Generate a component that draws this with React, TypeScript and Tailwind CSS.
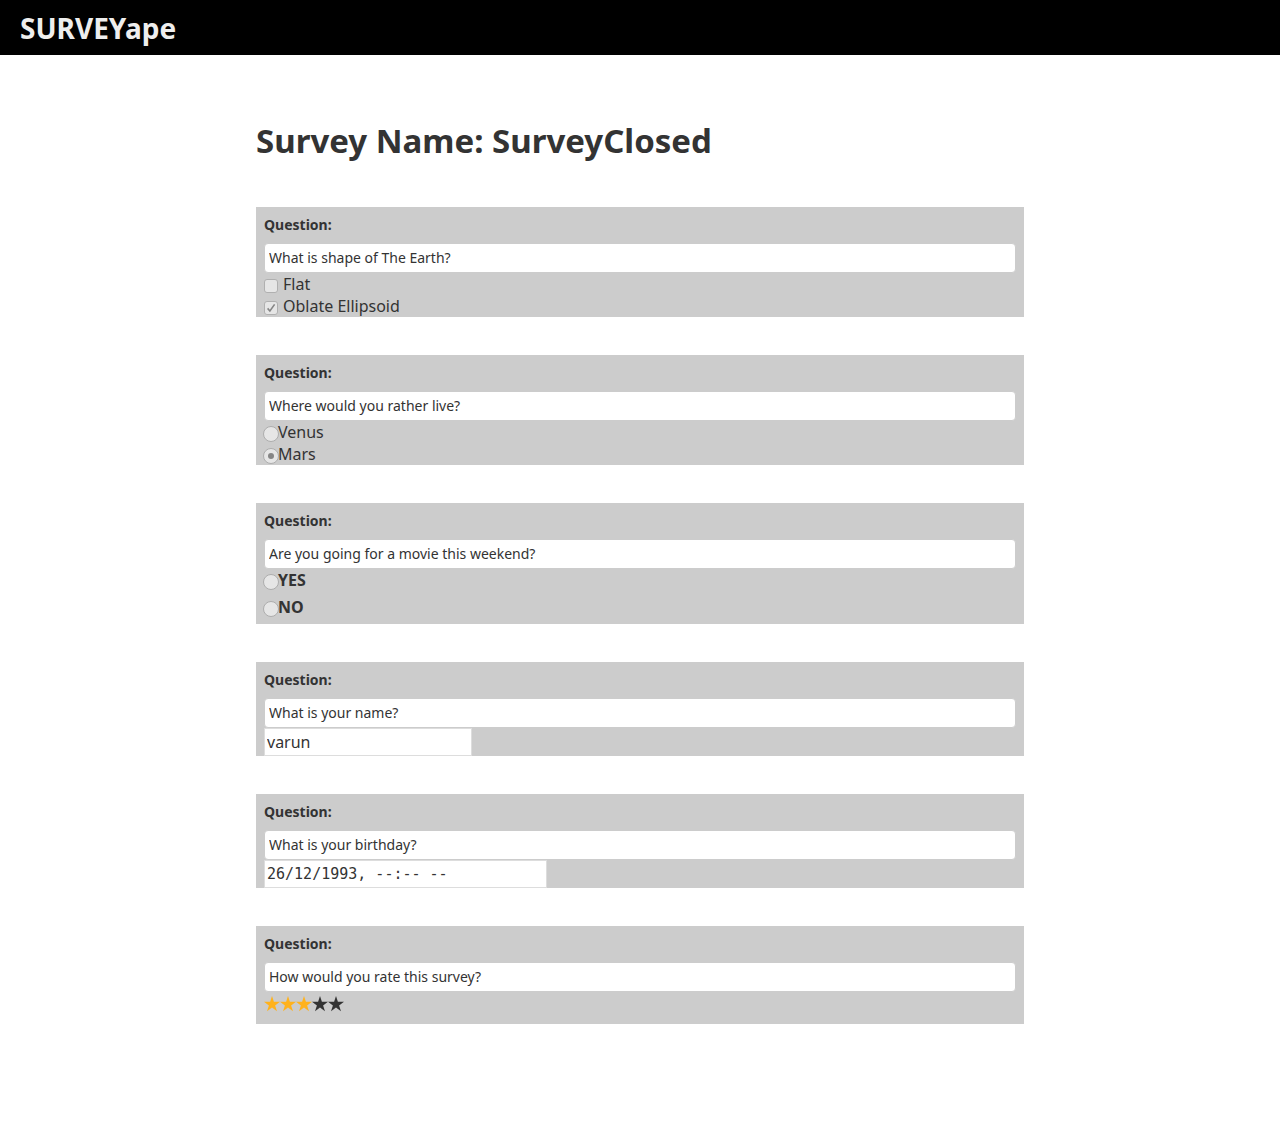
import { useState, type ReactNode } from "react";

type ChoiceProps = { name: string; label: string; checked?: boolean };

function QuestionCard({ id, text, children }: { id: string; text: string; children: ReactNode }) {
  return (
    <section className="bg-[#ccc] px-2">
      <label htmlFor={id} className="block h-9 text-sm leading-9 font-bold">
        Question:
      </label>
      <input
        id={id}
        type="text"
        readOnly
        defaultValue={text}
        className="block h-[30px] w-full rounded border border-[#ccc] bg-white px-1 pb-0.5 text-sm outline-none"
      />
      {children}
    </section>
  );
}

function CheckOption({ name, label, checked }: ChoiceProps) {
  return (
    <label className="flex h-[22px] items-center gap-[5px] text-base leading-[22px]">
      <span className="relative mt-[3px] flex size-3.5 shrink-0">
        <input
          type="checkbox"
          name={name}
          disabled
          defaultChecked={checked}
          className="peer size-3.5 appearance-none rounded-[3px] border border-[#b0b0b0] bg-[#e6e6e6]"
        />
        <svg
          viewBox="0 0 14 14"
          className="pointer-events-none absolute inset-0 hidden size-3.5 peer-checked:block"
          fill="none"
          stroke="#858585"
          strokeWidth="1.6"
        >
          <path d="M3.6 7.4 5.9 10 10.6 3.4" />
        </svg>
      </span>
      {label}
    </label>
  );
}

function RadioOption({ name, label, checked }: ChoiceProps) {
  return (
    <label className="flex h-[22px] items-center text-base leading-[22px]">
      <span className="relative -mx-px mt-[3px] flex size-4 shrink-0">
        <input
          type="radio"
          name={name}
          disabled
          defaultChecked={checked}
          className="peer size-4 appearance-none rounded-full border border-[#adadad] bg-[#e6e6e6]"
        />
        <svg
          viewBox="0 0 16 16"
          className="pointer-events-none absolute inset-0 hidden size-4 peer-checked:block"
          fill="#858585"
        >
          <circle cx="8" cy="8" r="3" />
        </svg>
      </span>
      {label}
    </label>
  );
}

function StarRating({ initial }: { initial: number }) {
  const [rating, setRating] = useState(initial);
  return (
    <div className="flex h-8 items-start pt-1" role="group" aria-label="Rating">
      {[1, 2, 3, 4, 5].map((value) => (
        <button
          key={value}
          type="button"
          aria-label={`${value} of 5 stars`}
          onClick={() => setRating(value)}
          className={value <= rating ? "size-4 text-[#ffb21c]" : "size-4 text-[#333]"}
        >
          <svg viewBox="0 0 16 16" fill="currentColor" className="size-4">
            <path d="M8 0 9.9 5.8H16L11.1 9.4 13 15.2 8 11.6 3 15.2 4.9 9.4 0 5.8H6.1Z" />
          </svg>
        </button>
      ))}
    </div>
  );
}

export default function App() {
  return (
    <div className="bg-white font-['Noto_Sans','Open_Sans',sans-serif] text-[#333]">
      <header className="flex h-[55px] items-center bg-black px-5">
        <a href="#" className="text-[28px] leading-8 font-bold text-[#eee]">
          SURVEYape
        </a>
      </header>
      <main className="mx-auto w-3/5 pt-16 pb-24">
        <h1 className="text-[33px] leading-[44px] font-bold">Survey Name: SurveyClosed</h1>
        <form className="mt-11 flex flex-col gap-[38px]">
          <QuestionCard id="q-shape" text="What is shape of The Earth?">
            <CheckOption name="shape" label="Flat" />
            <CheckOption name="shape" label="Oblate Ellipsoid" checked />
          </QuestionCard>
          <QuestionCard id="q-live" text="Where would you rather live?">
            <RadioOption name="live" label="Venus" />
            <RadioOption name="live" label="Mars" checked />
          </QuestionCard>
          <QuestionCard id="q-movie" text="Are you going for a movie this weekend?">
            <div className="flex flex-col gap-[5px] pb-1.5 font-bold">
              <RadioOption name="movie" label="YES" />
              <RadioOption name="movie" label="NO" />
            </div>
          </QuestionCard>
          <QuestionCard id="q-name" text="What is your name?">
            <input
              type="text"
              aria-label="Name"
              readOnly
              defaultValue="varun"
              className="block h-7 w-52 border border-[#ddd] bg-white px-0.5 text-base outline-none"
            />
          </QuestionCard>
          <QuestionCard id="q-birthday" text="What is your birthday?">
            <input
              type="text"
              aria-label="Birthday"
              readOnly
              defaultValue="26/12/1993, --:-- --"
              className="block h-7 w-[283px] border border-[#ddd] bg-white px-0.5 font-['DejaVu_Sans_Mono',monospace] text-[15px] outline-none"
            />
          </QuestionCard>
          <QuestionCard id="q-rate" text="How would you rate this survey?">
            <StarRating initial={3} />
          </QuestionCard>
        </form>
      </main>
    </div>
  );
}
